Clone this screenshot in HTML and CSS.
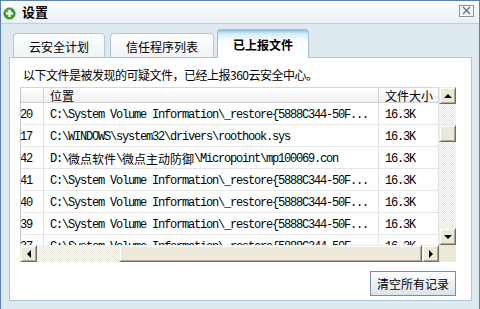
FILE: index.html
```html
<!DOCTYPE html>
<html lang="zh-CN">

<head>
    <meta charset="UTF-8">
    <title>设置</title>
    <link rel="stylesheet" href="styles.css">
</head>

<body>
    <div class="window">
        <div class="titlebar">
            <svg class="app-icon" width="13" height="13" viewBox="0 0 13 13">
                <circle cx="6.5" cy="6.5" r="5.6" fill="#3d9f26" stroke="#2c7a19" stroke-width="0.8"/>
                <circle cx="5.8" cy="5.2" r="3.2" fill="#6cc94a" opacity="0.6"/>
                <rect x="5.4" y="3" width="2.2" height="7" fill="#ffffff"/>
                <rect x="3" y="5.4" width="7" height="2.2" fill="#ffffff"/>
            </svg>
            <span class="title">设置</span>
            <span class="close-btn">
                <svg width="11" height="9" viewBox="0 0 11 9">
                    <path d="M2 1 L9 8 M9 1 L2 8" stroke="#5b6b7c" stroke-width="1.2" fill="none"/>
                </svg>
            </span>
        </div>

        <div class="body">
            <div class="tabs">
                <div class="tab">云安全计划</div>
                <div class="tab tab-wide">信任程序列表</div>
                <div class="tab active">已上报文件</div>
            </div>

            <div class="panel">
                <p class="intro">以下文件是被发现的可疑文件，已经上报360云安全中心。</p>

                <div class="list">
                    <div class="list-view">
                        <div class="list-row list-head">
                            <div class="cell col-id"></div>
                            <div class="cell col-path">位置</div>
                            <div class="cell col-size">文件大小</div>
                        </div>
                        <div class="list-row">
                            <div class="cell col-id">20</div>
                            <div class="cell col-path">C:\System Volume Information\_restore{5888C344-50F...</div>
                            <div class="cell col-size">16.3K</div>
                        </div>
                        <div class="list-row">
                            <div class="cell col-id">17</div>
                            <div class="cell col-path">C:\WINDOWS\system32\drivers\roothook.sys</div>
                            <div class="cell col-size">16.3K</div>
                        </div>
                        <div class="list-row">
                            <div class="cell col-id">42</div>
                            <div class="cell col-path">D:\<span class="wide">微点软件</span>\<span class="wide">微点主动防御</span>\Micropoint\mp100069.con</div>
                            <div class="cell col-size">16.3K</div>
                        </div>
                        <div class="list-row">
                            <div class="cell col-id">41</div>
                            <div class="cell col-path">C:\System Volume Information\_restore{5888C344-50F...</div>
                            <div class="cell col-size">16.3K</div>
                        </div>
                        <div class="list-row">
                            <div class="cell col-id">40</div>
                            <div class="cell col-path">C:\System Volume Information\_restore{5888C344-50F...</div>
                            <div class="cell col-size">16.3K</div>
                        </div>
                        <div class="list-row">
                            <div class="cell col-id">39</div>
                            <div class="cell col-path">C:\System Volume Information\_restore{5888C344-50F...</div>
                            <div class="cell col-size">16.3K</div>
                        </div>
                        <div class="list-row">
                            <div class="cell col-id">37</div>
                            <div class="cell col-path">C:\System Volume Information\_restore{5888C344-50F...</div>
                            <div class="cell col-size">16.3K</div>
                        </div>
                    </div>

                    <div class="vscroll">
                        <div class="sb-btn"><span class="arrow up"></span></div>
                        <div class="sb-track v">
                            <div class="sb-thumb v-thumb"></div>
                        </div>
                        <div class="sb-btn"><span class="arrow down"></span></div>
                    </div>

                    <div class="hscroll">
                        <div class="sb-btn"><span class="arrow left"></span></div>
                        <div class="sb-track h"></div>
                        <div class="sb-thumb h-thumb"></div>
                        <div class="sb-btn"><span class="arrow right"></span></div>
                    </div>

                    <div class="sb-corner"></div>
                </div>

                <div class="actions">
                    <button class="clear-button">清空所有记录</button>
                </div>
            </div>
        </div>
    </div>
</body>

</html>
```

FILE: styles.css
```css
body {
    margin: 0;
    font-family: "Noto Sans CJK SC", "Liberation Sans", sans-serif;
    font-size: 12px;
    color: #000000;
}

.window {
    width: 480px;
    height: 309px;
    box-sizing: border-box;
    border: 1px solid #5b82ad;
    border-bottom: none;
    background-color: #dfe9f0;
    display: flex;
    flex-direction: column;
}

.titlebar {
    height: 22px;
    border-bottom: 1px solid #bccfdc;
    background: linear-gradient(#fbfcfd, #e9f0f5);
    display: flex;
    align-items: center;
    padding: 0 5px 0 2px;
}

.app-icon {
    margin-top: 2px;
}

.title {
    margin-left: 6px;
    font-size: 13px;
    font-weight: bold;
    line-height: 16px;
}

.close-btn {
    margin-left: auto;
    margin-top: -3px;
    width: 13px;
    height: 10px;
    border: 1px solid #8796a6;
    background-color: #f3f6f8;
    display: flex;
    align-items: center;
    justify-content: center;
}

.body {
    flex: 1;
    padding: 5px 7px 8px 8px;
    display: flex;
    flex-direction: column;
}

/* tabs */
.tabs {
    display: flex;
    align-items: flex-end;
    padding-left: 4px;
    height: 28px;
    position: relative;
    z-index: 1;
}

.tab {
    width: 90px;
    height: 23px;
    border: 1px solid #b3c9d8;
    border-bottom: none;
    border-radius: 4px 4px 0 0;
    background: linear-gradient(#ffffff, #edf3f7);
    display: flex;
    align-items: center;
    justify-content: center;
    padding-top: 1px;
    box-sizing: content-box;
    height: 22px;
    margin-right: 5px;
}

.tab-wide {
    width: 102px;
    margin-right: 3px;
}

.tab.active {
    height: 28px;
    padding-top: 0;
    margin-bottom: -1px;
    border-color: #9cc0d8;
    background: linear-gradient(#86c3e8, #d8edf9 4px, #ffffff 12px);
    font-weight: bold;
}

.panel {
    flex: 1;
    background-color: #ffffff;
    border: 1px solid #a9c5d8;
    padding: 0 15px 0 10px;
    display: flex;
    flex-direction: column;
}

.intro {
    margin: 9px 0 4px 3px;
    line-height: 16px;
    letter-spacing: -0.5px;
}

/* list view */
.list {
    display: grid;
    grid-template-columns: 419px 17px;
    grid-template-rows: 158px 17px;
}

.list-view {
    overflow: hidden;
    border-left: 1px solid #c4c4c4;
    font-family: "Liberation Mono", "Noto Sans CJK SC", monospace;
    font-size: 12px;
    letter-spacing: -1.2px;
}

.wide {
    letter-spacing: 0;
}

.list-row {
    display: flex;
    height: 22px;
    border-bottom: 1px solid #e6e6e6;
    box-sizing: border-box;
}

.list-head {
    height: 16px;
    border-top: 1px solid #d6d6d6;
    border-bottom: 1px solid #d0d0d0;
    background: linear-gradient(#ffffff, #f0f0f0);
    font-family: "Noto Sans CJK SC", sans-serif;
    letter-spacing: 0;
}

.cell {
    white-space: nowrap;
    overflow: hidden;
    display: flex;
    align-items: center;
    box-sizing: border-box;
    border-right: 1px solid #e3e3e3;
    padding-top: 3px;
}

.list-head .cell {
    border-right-color: #d2d2d2;
    padding-top: 0;
}

.col-id {
    width: 23px;
    text-indent: -1px;
}

.col-path {
    width: 335px;
    padding-left: 6px;
}

.col-size {
    width: 60px;
    padding-left: 6px;
}

/* scrollbars */
.vscroll {
    display: flex;
    flex-direction: column;
}

.hscroll {
    display: flex;
}

.sb-btn {
    width: 17px;
    height: 17px;
    flex: none;
    box-sizing: border-box;
    background-color: #ece9d8;
    border: 1px solid;
    border-color: #f1efe2 #716f64 #716f64 #f1efe2;
    box-shadow: inset 1px 1px #ffffff, inset -1px -1px #aca899;
    display: flex;
    align-items: center;
    justify-content: center;
}

.sb-track {
    flex: 1;
    background-color: #f4f3ee;
    background-image: repeating-conic-gradient(#ffffff 0 25%, #e6e4da 0 50%);
    background-size: 2px 2px;
}

.sb-track.h {
    flex: none;
    width: 82px;
}

.sb-thumb {
    box-sizing: border-box;
    background-color: #ece9d8;
    border: 1px solid;
    border-color: #f1efe2 #716f64 #716f64 #f1efe2;
    box-shadow: inset 1px 1px #ffffff, inset -1px -1px #aca899;
}

.v-thumb {
    height: 17px;
    margin-top: 21px;
}

.h-thumb {
    width: 303px;
}

.sb-corner {
    background-color: #ece9d8;
}

.arrow {
    width: 0;
    height: 0;
    border: 4px solid transparent;
}

.arrow.up {
    border-bottom-color: #000000;
    margin-top: -4px;
}

.arrow.down {
    border-top-color: #000000;
    margin-bottom: -4px;
}

.arrow.left {
    border-right-color: #000000;
    margin-left: -4px;
}

.arrow.right {
    border-left-color: #000000;
    margin-right: -4px;
}

.actions {
    display: flex;
    justify-content: flex-end;
    margin-top: 9px;
}

.clear-button {
    width: 86px;
    height: 25px;
    padding: 0;
    border: 1px solid #7a8ea2;
    background: linear-gradient(#ffffff, #dbe4ea);
    font-family: inherit;
    font-size: 12px;
    color: #000000;
}
```
